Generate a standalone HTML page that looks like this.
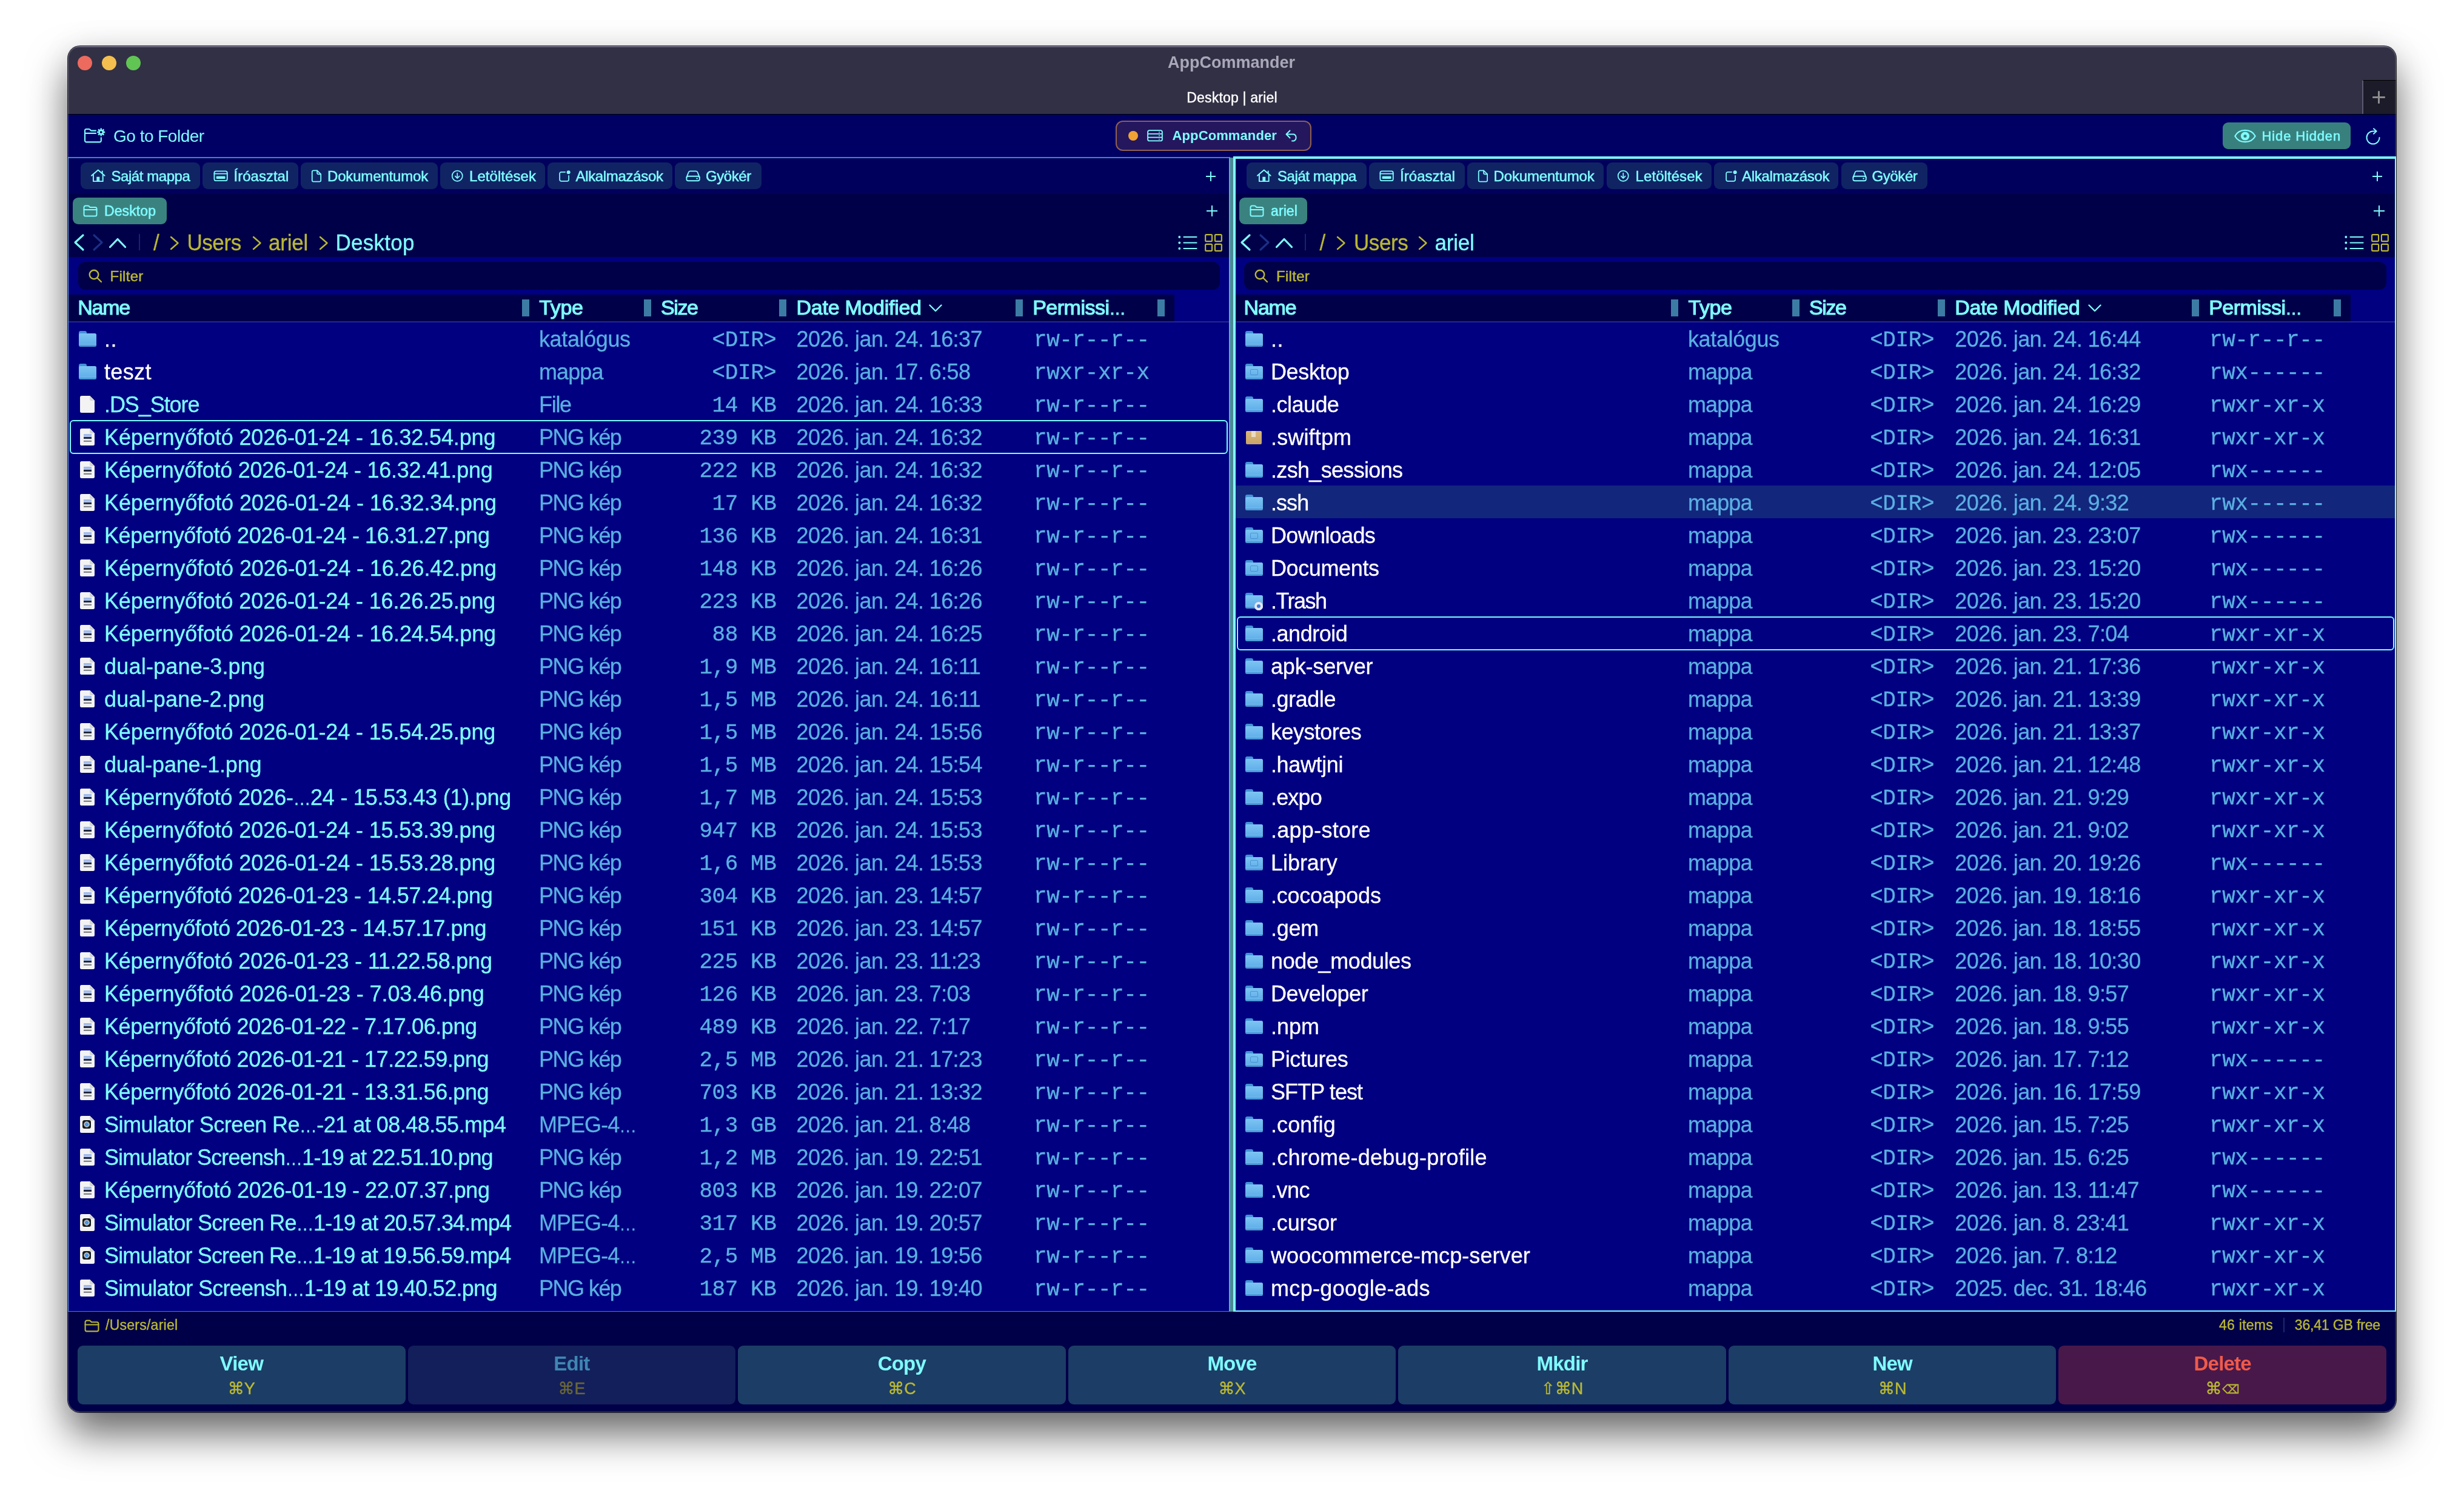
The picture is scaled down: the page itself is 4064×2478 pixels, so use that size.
<!DOCTYPE html>
<html lang="hu"><head><meta charset="utf-8"><title>AppCommander</title>
<style>
*{box-sizing:border-box;margin:0;padding:0}
html,body{width:4064px;height:2478px;overflow:hidden;background:#fff}
body{position:relative;font-family:"Liberation Sans","DejaVu Sans",sans-serif;color:#7ffcff}
span,i,b,div,svg{position:absolute;display:block;white-space:pre;font-style:normal;font-weight:400}
#shadow{left:112px;top:76px;width:3840px;height:2254px;border-radius:20px;box-shadow:0 0 0 1px rgba(0,0,0,.8),0 36px 66px 0 rgba(0,0,0,.58),0 0 60px rgba(0,0,0,.06)}
#win{will-change:transform;left:112px;top:76px;width:3840px;height:2254px;border-radius:20px;overflow:hidden;background:#000048}
#win::after{content:"";position:absolute;left:0;top:0;right:0;bottom:0;border-radius:20px;box-shadow:inset 0 0 0 1.5px rgba(255,255,255,.17);pointer-events:none;z-index:50}
#titlebar{z-index:2;left:0;top:0;width:3840px;height:113px;background:#323044;border-bottom:1px solid #000;border-top:2px solid #595870}
.tl{top:14px;width:24px;height:24px;border-radius:50%}
#title{left:-1px;width:3840px;text-align:center;top:9.1px;font-size:27px;line-height:32px;font-weight:700;color:#a9a7b8}
#subtitle{-webkit-text-stroke:.4px #fff;left:0;width:3840px;text-align:center;top:68.5px;font-size:23px;line-height:28px;letter-spacing:.2px;color:#fff}
#newtab{left:3784px;top:54px;width:56px;height:56px;background:#1c1b29;border-left:2px solid #5b5a70;border-top:1.5px solid #000}
.plus::before,.plus::after{content:"";position:absolute;background:#7ffcff}
.plus::before{left:0;right:0;top:calc(50% - 1px);height:2px}
.plus::after{top:0;bottom:0;left:calc(50% - 1px);width:2px}
.plus.g::before,.plus.g::after{background:#8c8c8e;border-radius:1.3px}
.plus.g::before{height:2.6px;top:calc(50% - 1.3px)}.plus.g::after{width:2.6px;left:calc(50% - 1.3px)}
#toolbar{left:0;top:112px;width:3840px;height:72px;background:#000064}
.ic{line-height:0}
#gtf{left:75px;top:21.5px;font-size:28px;line-height:30px;letter-spacing:-.5px}
#pill{left:1727.6px;top:11px;width:323px;height:50px;border:2px solid #8f6052;border-radius:12px;background:#24175e}
#pill .dot{left:19.4px;top:15.2px;width:16px;height:16px;border-radius:50%;background:#f0a335}
#pill .pt{left:92px;top:8.9px;font-size:22px;line-height:28px;font-weight:700;letter-spacing:.1px}
#hide{left:3554px;top:14px;width:210.6px;height:44px;border-radius:9px;background:#38807e}
#hide .hx{left:64.6px;top:8.6px;font-size:22px;line-height:28px;letter-spacing:.85px;-webkit-text-stroke:.55px #7ffcff}
#divider{left:1917px;top:184px;width:5px;height:1904px;background:#4a8a94}
.pane{border:2px solid #3c86c8;border-right-color:#58aacc;overflow:hidden;background:#000048;box-sizing:content-box}
.pane.act{border-color:#7ffcff;z-index:3}
.favbar{left:0;right:0;background:#00005c}
.fav{height:43.5px;border-radius:9px;background:#102464}

.fav .ft{top:.9px;font-size:24px;line-height:43.5px;letter-spacing:-.42px;-webkit-text-stroke:.5px #7ffcff}
.tab{height:43.5px;border-radius:9px;background:#3a8280}
.tab .ic{top:11.5px}
.tab .tt{top:.8px;font-size:23px;line-height:43.5px;letter-spacing:.1px;-webkit-text-stroke:.55px #7ffcff}
.vsep{width:2px;height:27px;background:#15246e}
.crumb{font-size:35px;line-height:48px;transform:scaleY(1.08);transform-origin:0 36.1px;-webkit-text-stroke:.3px}
.crumb.y{color:#bab833}.crumb.cy{color:#7ffcff}
.listbg{left:0;right:0;background:#000080}
.filter{height:46px;border-radius:12px;background:#000048}
.filter .ftx{left:53px;top:1.2px;font-size:24px;line-height:45px;letter-spacing:.3px;color:#bab833;-webkit-text-stroke:.5px #bab833}
.hdr{left:0;height:44px;background:#000048}
.hline{left:0;right:0;height:1.5px;background:#262694}
.hh{width:12px;height:28px;background:#3c7ca4}
.ht{font-size:34px;line-height:44px;font-weight:400;-webkit-text-stroke:1.15px;margin-top:-.8px}
.row{left:0;right:0;height:54px}
.row.hov{background:#12267c}
.cur{left:2px;right:2px;top:0;bottom:-2px;border:2px solid #7ffcff;border-radius:6px;z-index:2}
.pane.act .cur{right:1px}
.ri{top:0;width:30px;height:54px}
.nm{top:2px;font-size:36px;-webkit-text-stroke:.3px;line-height:54px;color:#7ffcff}
.nm.w{color:#fff}
.ty,.dt{top:2px;font-size:36px;-webkit-text-stroke:.3px;line-height:54px;color:#5aafe1}
.dt{letter-spacing:-.6px}
.sz,.pm{top:4px;font-family:"Liberation Mono","DejaVu Sans Mono",monospace;font-size:36px;line-height:54px;letter-spacing:-.42px;color:#5aafe1;-webkit-text-stroke:.35px}
.fo{left:0;top:15px;width:29px;height:26px}
.fo::before{content:"";position:absolute;left:0;top:0;width:13px;height:8px;border-radius:3px 3px 0 0;background:#4392d6}
.fo::after{content:"";position:absolute;left:0;top:4px;width:29px;height:22px;border-radius:2.5px;background:linear-gradient(#7cc4f3 0,#62b0ea 78%,#7abfee 82%,#4d9cdc 88%,#4a98d8 100%)}
.fo b{z-index:2}
.em{left:8px;top:9px;width:13px;height:10px;border:1.5px solid rgba(50,120,190,.6);border-radius:2px}
.bd{left:15px;top:15px;width:14px;height:14px;border-radius:50%;background:#e8e8ee;box-shadow:inset 0 0 0 4px #e8e8ee, inset 0 0 0 7px #3a7ae0}
.pk{left:1.5px;top:18px;width:26px;height:22px;border-radius:2px;background:linear-gradient(#d9b87c,#c9a468)}
.pk::after{content:"";position:absolute;left:9px;top:0;width:7px;height:10px;background:#eadcc0}
.fi{left:2.5px;top:14.3px;width:24px;height:28px;border-radius:2.5px;background:linear-gradient(225deg,rgba(0,0,0,0) 5.6px,#f3f3f3 5.6px)}
.fi::after{content:"";position:absolute;right:0;top:0;width:8px;height:8px;background:linear-gradient(225deg,rgba(0,0,0,0) 5.6px,#d4d4d4 5.6px);border-radius:0 0 0 2px}
.pv{left:5.5px;top:8.5px;width:13px;height:13.5px;background:linear-gradient(#9db8ea 0,#b4c6ee 42%,#1d2233 42%,#2b3148 62%,#f2f2f2 62%,#dadada 84%,#606068 84%,#9a9aa0 100%)}
.qt{left:4px;top:7px;width:14px;height:14px;border-radius:3.5px;background:radial-gradient(circle at 50% 50%,#4aa0f0 0,#3a90e8 2.6px,#c8ccd2 3.2px,#9a9ea6 4.6px,#16171a 5.2px)}
#status{left:0;top:2088px;width:3840px;height:56px;background:#000048}
#status .st{top:0;font-size:23px;line-height:44px;letter-spacing:.25px;color:#bab833;-webkit-text-stroke:.4px #bab833}
#status .ic{}
.ssep{left:3654px;top:10px;width:2px;height:24px;background:#1a2a6e}
.btn{height:97px;border-radius:9px;background:#1c3d66}
.btn.dis{background:#121f5a}
.btn.del{background:#48184a}
.btn span{left:0;right:0;text-align:center}
.b1{top:10.3px;font-size:33px;line-height:40px;font-weight:700;letter-spacing:-.8px}
.b2{top:54.6px;font-size:27px;line-height:32px;color:#bab833;-webkit-text-stroke:.4px}
.btn.dis .b1{color:#3f86b4}.btn.dis .b2{color:#6a6638}
.btn.del .b1{color:#f05a4a}

em{font-style:normal;font-size:.74em;position:relative;top:-1px;margin-left:1px}
u{text-decoration:none;font-size:.8em;letter-spacing:-.5px}

</style></head><body>
<div id="shadow"></div>
<div id="win">
<div id="titlebar">
<i class="tl" style="left:16px;background:#ed6a5e"></i><i class="tl" style="left:56px;background:#f5bf4f"></i><i class="tl" style="left:96px;background:#61c554"></i>
<div id="title">AppCommander</div>
<div id="subtitle">Desktop | ariel</div>
<div id="newtab"><div class="plus g" style="left:14.6px;top:16.9px;width:21.5px;height:21.5px"></div></div>
</div>
<div id="toolbar">
<span class="ic" style="left:26px;top:22px;color:#7ffcff"><svg width="37" height="28" viewBox="0 0 37 28" fill="none" stroke="currentColor" stroke-width="2.1" stroke-linecap="round" stroke-linejoin="round"><path d="M2 9.9V5.45a2.5 2.5 0 0 1 2.5-2.5H8.6a2 2 0 0 1 1.4.6L11.6 5a2 2 0 0 0 1.4.6H20M2 9.9H20M2 9.9V21.9a2.5 2.5 0 0 0 2.5 2.5H26.3a2.5 2.5 0 0 0 2.5-2.5V17.2"/><circle cx="28.7" cy="8.1" r="3.3" stroke-width="2.7"/><path d="M33.00 8.10L35.20 8.10M31.74 11.14L33.30 12.70M28.70 12.40L28.70 14.60M25.66 11.14L24.10 12.70M24.40 8.10L22.20 8.10M25.66 5.06L24.10 3.50M28.70 3.80L28.70 1.60M31.74 5.06L33.30 3.50" stroke-width="2.5" stroke-linecap="butt"/></svg></span>
<span id="gtf">Go to Folder</span>
<div id="pill"><i class="dot"></i><span class="ic" style="left:50px;top:13.3px;color:#7ffcff"><svg width="26" height="19.6" viewBox="0 0 28 21" fill="none" stroke="currentColor" stroke-width="2" stroke-linejoin="round"><rect x="1.2" y="1.2" width="25.6" height="18.6" rx="3"/><path d="M1.2 7.4 H26.8 M1.2 13.6 H26.8"/><circle cx="21.5" cy="4.3" r="1" fill="currentColor" stroke="none"/><circle cx="21.5" cy="10.5" r="1" fill="currentColor" stroke="none"/><circle cx="21.5" cy="16.7" r="1" fill="currentColor" stroke="none"/></svg></span><span class="pt">AppCommander</span><span class="ic" style="left:278.5px;top:13px;color:#7ffcff"><svg width="22" height="20" viewBox="0 0 22 20" fill="none" stroke="currentColor" stroke-width="2" stroke-linecap="round" stroke-linejoin="round"><path d="M7.5 1.5 L1.5 7.5 L7.5 13.5"/><path d="M2 7.5 H14 a6 6 0 0 1 0 11 H11"/></svg></span></div>
<div id="hide"><span class="ic" style="left:18.6px;top:10.5px;color:#7ffcff"><svg width="36" height="23" viewBox="0 0 36 23" style="overflow:visible" fill="none" stroke="currentColor" stroke-width="2.2" stroke-linejoin="round"><path d="M1.3 11.5 C8 -1.3 28 -1.3 34.7 11.5 C28 24.3 8 24.3 1.3 11.5 Z"/><circle cx="18" cy="11.5" r="7.1" fill="currentColor" stroke="none"/><circle cx="18" cy="11.5" r="2.6" fill="#38807e" stroke="none"/></svg></span><span class="hx">Hide Hidden</span></div>
<span class="ic" style="left:3790px;top:23px;color:#7ffcff"><svg width="24" height="28" viewBox="0 0 24 28" fill="none" stroke="currentColor" stroke-width="2" stroke-linecap="round" stroke-linejoin="round"><path d="M22.5 16 A10.5 10.5 0 1 1 12 5.5 H17"/><path d="M13 1.2 L17.6 5.5 L13 9.8"/></svg></span>
</div>
<div id="divider"></div>
<div class="pane" style="left:0px;top:183px;width:1914px;height:1902px;border-width:2px 2px 1px 1px"><div class="favbar" style="top:0;height:59px"></div><div class="fav" style="left:19.5px;top:7px;width:197.5px"><span class="ic" style="left:16.1px;top:10.3px"><svg width="25.6" height="23.6" viewBox="0 0 26 24" style="" fill="none" stroke="currentColor" stroke-linecap="round" stroke-linejoin="round"><path d="M2 12 L13 2.5 L24 12" stroke-width="2"/><path d="M5 10.5 V21.5 H21 V10.5" stroke-width="2"/><path d="M20 8 V4.5" stroke-width="2"/><rect x="10.5" y="14" width="5" height="7.5" fill="currentColor" stroke="none"/></svg></span><span class="ft" style="left:50.9px;letter-spacing:-0.427px">Saját mappa</span></div><div class="fav" style="left:221.4px;top:7px;width:157.6px"><span class="ic" style="left:17.4px;top:12.9px"><svg width="24.2" height="18.6" viewBox="0 0 26 20" style="" fill="none" stroke="currentColor" stroke-linecap="round" stroke-linejoin="round"><rect x="1.5" y="1.5" width="23" height="17" rx="3" stroke-width="2"/><path d="M1.5 6 H24.5" stroke-width="2"/><rect x="5" y="10.5" width="16" height="4.5" rx="1" fill="currentColor" stroke="none"/></svg></span><span class="ft" style="left:51.1px;letter-spacing:0.012px">Íróasztal</span></div><div class="fav" style="left:383.0px;top:7px;width:225.8px"><span class="ic" style="left:17.3px;top:12px"><svg width="17.5" height="21" viewBox="0 0 20 24" style="" fill="none" stroke="currentColor" stroke-linecap="round" stroke-linejoin="round"><path d="M4.5 1.5 H11.5 L18.5 8.5 V20 a2.5 2.5 0 0 1 -2.5 2.5 H4.5 A2.5 2.5 0 0 1 2 20 V4 A2.5 2.5 0 0 1 4.5 1.5 Z" stroke-width="2"/><path d="M11.5 1.5 V6 a2.5 2.5 0 0 0 2.5 2.5 H18.5" stroke-width="2"/></svg></span><span class="ft" style="left:44.0px;letter-spacing:-0.171px">Dokumentumok</span></div><div class="fav" style="left:613.0px;top:7px;width:173.0px"><span class="ic" style="left:17.8px;top:12.2px"><svg width="20.5" height="20.5" viewBox="0 0 24 24" style="" fill="none" stroke="currentColor" stroke-linecap="round" stroke-linejoin="round"><circle cx="12" cy="12" r="10" stroke-width="2"/><path d="M12 6.5 V16.5 M8 12.5 L12 16.5 L16 12.5" stroke-width="2"/></svg></span><span class="ft" style="left:48.0px;letter-spacing:0.066px">Letöltések</span></div><div class="fav" style="left:790.0px;top:7px;width:205.8px"><span class="ic" style="left:18.0px;top:12.2px"><svg width="20.5" height="20.5" viewBox="0 0 24 24" style="" fill="none" stroke="currentColor" stroke-linecap="round" stroke-linejoin="round"><path d="M13 4.5 H5.5 A3 3 0 0 0 2.5 7.5 V19 a3 3 0 0 0 3 3 H17 a3 3 0 0 0 3 -3 V11.5" stroke-width="2"/><circle cx="19.5" cy="5" r="3.5" fill="currentColor" stroke="none"/></svg></span><span class="ft" style="left:46.5px;letter-spacing:-0.333px">Alkalmazások</span></div><div class="fav" style="left:1000.0px;top:7px;width:142.8px"><span class="ic" style="left:18.2px;top:13.4px"><svg width="24.2" height="18.6" viewBox="0 0 26 20" style="" fill="none" stroke="currentColor" stroke-linecap="round" stroke-linejoin="round"><path d="M1.5 12.5 L5 3.5 A3 3 0 0 1 7.8 1.5 H18.2 A3 3 0 0 1 21 3.5 L24.5 12.5" stroke-width="2"/><rect x="1.5" y="10.5" width="23" height="8" rx="3" stroke-width="2"/><circle cx="20" cy="14.5" r="1.3" fill="currentColor" stroke="none"/></svg></span><span class="ft" style="left:51.0px;letter-spacing:-0.432px">Gyökér</span></div><div class="plus" style="left:1876px;top:21.600000000000023px;width:16px;height:16px"></div><div class="tab" style="left:7.0px;top:65px;width:154.7px"><span class="ic" style="left:17px"><svg width="24" height="20" viewBox="0 0 24 20" style="" fill="none" stroke="currentColor" stroke-linecap="round" stroke-linejoin="round"><path d="M1.5 5 V16 a2.5 2.5 0 0 0 2.5 2.5 H20 a2.5 2.5 0 0 0 2.5 -2.5 V6.5 A2.5 2.5 0 0 0 20 4 H11.5 L9.5 2 A2 2 0 0 0 8.2 1.5 H4 A2.5 2.5 0 0 0 1.5 4 Z" stroke-width="2"/><path d="M1.5 8 H22.5" stroke-width="2"/></svg></span><span class="tt" style="left:52px">Desktop</span></div><div class="plus" style="left:1877px;top:78px;width:18px;height:18px"></div><svg class="nav" style="left:7.0px;top:123px" width="96" height="32" viewBox="0 0 96 32" fill="none" stroke-linecap="round" stroke-linejoin="round"><path d="M17 4 L4 16 L17 28" stroke="#7ffcff" stroke-width="3.2"/><path d="M35 4 L48 16 L35 28" stroke="#1c2f86" stroke-width="3.2"/><path d="M61.5 23.5 L74 10.5 L86.5 23.5" stroke="#7ffcff" stroke-width="3.2"/></svg><div class="vsep" style="left:115.5px;top:125px"></div><span class="crumb y" style="left:140.0px;top:116.19999999999999px;letter-spacing:0px">/</span><svg class="nav" style="left:167.0px;top:128px" width="16" height="24" viewBox="0 0 16 24" fill="none" stroke="#bab833" stroke-width="2.4" stroke-linecap="round" stroke-linejoin="round"><path d="M2 2 L13.5 12 L2 22"/></svg><span class="crumb y" style="left:195.4px;top:116.19999999999999px;letter-spacing:-0.402px">Users</span><svg class="nav" style="left:302.6px;top:128px" width="16" height="24" viewBox="0 0 16 24" fill="none" stroke="#bab833" stroke-width="2.4" stroke-linecap="round" stroke-linejoin="round"><path d="M2 2 L13.5 12 L2 22"/></svg><span class="crumb y" style="left:330.0px;top:116.19999999999999px;letter-spacing:-0.21px">ariel</span><svg class="nav" style="left:413.0px;top:128px" width="16" height="24" viewBox="0 0 16 24" fill="none" stroke="#bab833" stroke-width="2.4" stroke-linecap="round" stroke-linejoin="round"><path d="M2 2 L13.5 12 L2 22"/></svg><span class="crumb cy" style="left:440.5px;top:116.19999999999999px;letter-spacing:0.266px">Desktop</span><svg class="nav" style="left:1830.0px;top:127px" width="32" height="25" viewBox="0 0 32 25" fill="none" stroke="#7ffcff" stroke-width="2.2" stroke-linecap="round"><path d="M9.5 3 H30.5 M9.5 12.5 H30.5 M9.5 22 H30.5"/><circle cx="2.3" cy="3" r="1.9" fill="#7ffcff" stroke="none"/><circle cx="2.3" cy="12.5" r="1.9" fill="#7ffcff" stroke="none"/><circle cx="2.3" cy="22" r="1.9" fill="#7ffcff" stroke="none"/></svg><svg class="nav" style="left:1873.5px;top:124.5px" width="29" height="29" viewBox="0 0 30 30" fill="none" stroke="#bab833" stroke-width="2.2"><rect x="1.2" y="1.2" width="11.3" height="11.3" rx="1.5"/><rect x="17.5" y="1.2" width="11.3" height="11.3" rx="1.5"/><rect x="1.2" y="17.5" width="11.3" height="11.3" rx="1.5"/><rect x="17.5" y="17.5" width="11.3" height="11.3" rx="1.5"/></svg><div class="listbg" style="top:163px;height:1739px"></div><div class="filter" style="left:15.5px;top:171px;width:1883.2px"><svg style="position:absolute;left:17px;top:12px" width="23" height="23" viewBox="0 0 23 23" fill="none" stroke="#bab833" stroke-width="2.4" stroke-linecap="round"><circle cx="9" cy="9" r="7.3"/><path d="M14.5 14.5 L21 21"/></svg><span class="ftx">Filter</span></div><div class="hdr" style="top:225px;width:1824.0px"></div><div class="hline" style="top:269px"></div><div class="hh" style="left:748.0px;top:233px"></div><div class="hh" style="left:949.0px;top:233px"></div><div class="hh" style="left:1171.7px;top:233px"></div><div class="hh" style="left:1562.3px;top:233px"></div><div class="hh" style="left:1795.8px;top:233px"></div><span class="ht" style="left:15.2px;top:225px;letter-spacing:-1.234px">Name</span><span class="ht" style="left:776.3px;top:225px;letter-spacing:-0.406px">Type</span><span class="ht" style="left:977.0px;top:225px;letter-spacing:-1.38px">Size</span><span class="ht" style="left:1200.6px;top:225px;letter-spacing:-0.282px">Date Modified</span><span class="ht" style="left:1590.2px;top:225px;letter-spacing:-0.504px">Permissi<u>…</u></span><svg class="nav" style="left:1419.0px;top:241px" width="22" height="13" viewBox="0 0 22 13" fill="none" stroke="#7ffcff" stroke-width="2.4" stroke-linecap="round" stroke-linejoin="round"><path d="M1.5 1.5 L11 11 L20.5 1.5"/></svg><div class="row" style="top:270px"><span class="ri" style="left:16.5px"><i class="fo"></i></span><span class="nm w" style="left:59.0px;letter-spacing:0.5px">..</span><span class="ty" style="left:776.0px;letter-spacing:-0.376px">katalógus</span><span class="sz" style="right:746.5px">&lt;DIR&gt;</span><span class="dt" style="left:1200.6px">2026. jan. 24. 16:37</span><span class="pm" style="left:1592.0px">rw-r--r--</span></div><div class="row" style="top:324px"><span class="ri" style="left:16.5px"><i class="fo"></i></span><span class="nm w" style="left:59.0px;letter-spacing:0.367px">teszt</span><span class="ty" style="left:776.0px;letter-spacing:-0.895px">mappa</span><span class="sz" style="right:746.5px">&lt;DIR&gt;</span><span class="dt" style="left:1200.6px">2026. jan. 17. 6:58</span><span class="pm" style="left:1592.0px">rwxr-xr-x</span></div><div class="row" style="top:378px"><span class="ri" style="left:16.5px"><i class="fi"></i></span><span class="nm" style="left:59.0px;letter-spacing:-1.072px">.DS_Store</span><span class="ty" style="left:776.0px;letter-spacing:-1.305px">File</span><span class="sz" style="right:746.5px">14 KB</span><span class="dt" style="left:1200.6px">2026. jan. 24. 16:33</span><span class="pm" style="left:1592.0px">rw-r--r--</span></div><div class="row" style="top:432px"><div class="cur"></div><span class="ri" style="left:16.5px"><i class="fi"><b class="pv"></b></i></span><span class="nm" style="left:59.0px;letter-spacing:-0.135px">Képernyőfotó 2026-01-24 - 16.32.54.png</span><span class="ty" style="left:776.0px;letter-spacing:-1.527px">PNG kép</span><span class="sz" style="right:746.5px">239 KB</span><span class="dt" style="left:1200.6px">2026. jan. 24. 16:32</span><span class="pm" style="left:1592.0px">rw-r--r--</span></div><div class="row" style="top:486px"><span class="ri" style="left:16.5px"><i class="fi"><b class="pv"></b></i></span><span class="nm" style="left:59.0px;letter-spacing:-0.265px">Képernyőfotó 2026-01-24 - 16.32.41.png</span><span class="ty" style="left:776.0px;letter-spacing:-1.527px">PNG kép</span><span class="sz" style="right:746.5px">222 KB</span><span class="dt" style="left:1200.6px">2026. jan. 24. 16:32</span><span class="pm" style="left:1592.0px">rw-r--r--</span></div><div class="row" style="top:540px"><span class="ri" style="left:16.5px"><i class="fi"><b class="pv"></b></i></span><span class="nm" style="left:59.0px;letter-spacing:-0.097px">Képernyőfotó 2026-01-24 - 16.32.34.png</span><span class="ty" style="left:776.0px;letter-spacing:-1.527px">PNG kép</span><span class="sz" style="right:746.5px">17 KB</span><span class="dt" style="left:1200.6px">2026. jan. 24. 16:32</span><span class="pm" style="left:1592.0px">rw-r--r--</span></div><div class="row" style="top:594px"><span class="ri" style="left:16.5px"><i class="fi"><b class="pv"></b></i></span><span class="nm" style="left:59.0px;letter-spacing:-0.392px">Képernyőfotó 2026-01-24 - 16.31.27.png</span><span class="ty" style="left:776.0px;letter-spacing:-1.527px">PNG kép</span><span class="sz" style="right:746.5px">136 KB</span><span class="dt" style="left:1200.6px">2026. jan. 24. 16:31</span><span class="pm" style="left:1592.0px">rw-r--r--</span></div><div class="row" style="top:648px"><span class="ri" style="left:16.5px"><i class="fi"><b class="pv"></b></i></span><span class="nm" style="left:59.0px;letter-spacing:-0.097px">Képernyőfotó 2026-01-24 - 16.26.42.png</span><span class="ty" style="left:776.0px;letter-spacing:-1.527px">PNG kép</span><span class="sz" style="right:746.5px">148 KB</span><span class="dt" style="left:1200.6px">2026. jan. 24. 16:26</span><span class="pm" style="left:1592.0px">rw-r--r--</span></div><div class="row" style="top:702px"><span class="ri" style="left:16.5px"><i class="fi"><b class="pv"></b></i></span><span class="nm" style="left:59.0px;letter-spacing:-0.138px">Képernyőfotó 2026-01-24 - 16.26.25.png</span><span class="ty" style="left:776.0px;letter-spacing:-1.527px">PNG kép</span><span class="sz" style="right:746.5px">223 KB</span><span class="dt" style="left:1200.6px">2026. jan. 24. 16:26</span><span class="pm" style="left:1592.0px">rw-r--r--</span></div><div class="row" style="top:756px"><span class="ri" style="left:16.5px"><i class="fi"><b class="pv"></b></i></span><span class="nm" style="left:59.0px;letter-spacing:-0.119px">Képernyőfotó 2026-01-24 - 16.24.54.png</span><span class="ty" style="left:776.0px;letter-spacing:-1.527px">PNG kép</span><span class="sz" style="right:746.5px">88 KB</span><span class="dt" style="left:1200.6px">2026. jan. 24. 16:25</span><span class="pm" style="left:1592.0px">rw-r--r--</span></div><div class="row" style="top:810px"><span class="ri" style="left:16.5px"><i class="fi"><b class="pv"></b></i></span><span class="nm" style="left:59.0px;letter-spacing:0.206px">dual-pane-3.png</span><span class="ty" style="left:776.0px;letter-spacing:-1.527px">PNG kép</span><span class="sz" style="right:746.5px">1,9 MB</span><span class="dt" style="left:1200.6px">2026. jan. 24. 16:11</span><span class="pm" style="left:1592.0px">rw-r--r--</span></div><div class="row" style="top:864px"><span class="ri" style="left:16.5px"><i class="fi"><b class="pv"></b></i></span><span class="nm" style="left:59.0px;letter-spacing:0.149px">dual-pane-2.png</span><span class="ty" style="left:776.0px;letter-spacing:-1.527px">PNG kép</span><span class="sz" style="right:746.5px">1,5 MB</span><span class="dt" style="left:1200.6px">2026. jan. 24. 16:11</span><span class="pm" style="left:1592.0px">rw-r--r--</span></div><div class="row" style="top:918px"><span class="ri" style="left:16.5px"><i class="fi"><b class="pv"></b></i></span><span class="nm" style="left:59.0px;letter-spacing:-0.138px">Képernyőfotó 2026-01-24 - 15.54.25.png</span><span class="ty" style="left:776.0px;letter-spacing:-1.527px">PNG kép</span><span class="sz" style="right:746.5px">1,5 MB</span><span class="dt" style="left:1200.6px">2026. jan. 24. 15:56</span><span class="pm" style="left:1592.0px">rw-r--r--</span></div><div class="row" style="top:972px"><span class="ri" style="left:16.5px"><i class="fi"><b class="pv"></b></i></span><span class="nm" style="left:59.0px;letter-spacing:-0.194px">dual-pane-1.png</span><span class="ty" style="left:776.0px;letter-spacing:-1.527px">PNG kép</span><span class="sz" style="right:746.5px">1,5 MB</span><span class="dt" style="left:1200.6px">2026. jan. 24. 15:54</span><span class="pm" style="left:1592.0px">rw-r--r--</span></div><div class="row" style="top:1026px"><span class="ri" style="left:16.5px"><i class="fi"><b class="pv"></b></i></span><span class="nm" style="left:59.0px;letter-spacing:-0.248px">Képernyőfotó 2026-<u>…</u>24 - 15.53.43 (1).png</span><span class="ty" style="left:776.0px;letter-spacing:-1.527px">PNG kép</span><span class="sz" style="right:746.5px">1,7 MB</span><span class="dt" style="left:1200.6px">2026. jan. 24. 15:53</span><span class="pm" style="left:1592.0px">rw-r--r--</span></div><div class="row" style="top:1080px"><span class="ri" style="left:16.5px"><i class="fi"><b class="pv"></b></i></span><span class="nm" style="left:59.0px;letter-spacing:-0.138px">Képernyőfotó 2026-01-24 - 15.53.39.png</span><span class="ty" style="left:776.0px;letter-spacing:-1.527px">PNG kép</span><span class="sz" style="right:746.5px">947 KB</span><span class="dt" style="left:1200.6px">2026. jan. 24. 15:53</span><span class="pm" style="left:1592.0px">rw-r--r--</span></div><div class="row" style="top:1134px"><span class="ri" style="left:16.5px"><i class="fi"><b class="pv"></b></i></span><span class="nm" style="left:59.0px;letter-spacing:-0.138px">Képernyőfotó 2026-01-24 - 15.53.28.png</span><span class="ty" style="left:776.0px;letter-spacing:-1.527px">PNG kép</span><span class="sz" style="right:746.5px">1,6 MB</span><span class="dt" style="left:1200.6px">2026. jan. 24. 15:53</span><span class="pm" style="left:1592.0px">rw-r--r--</span></div><div class="row" style="top:1188px"><span class="ri" style="left:16.5px"><i class="fi"><b class="pv"></b></i></span><span class="nm" style="left:59.0px;letter-spacing:-0.265px">Képernyőfotó 2026-01-23 - 14.57.24.png</span><span class="ty" style="left:776.0px;letter-spacing:-1.527px">PNG kép</span><span class="sz" style="right:746.5px">304 KB</span><span class="dt" style="left:1200.6px">2026. jan. 23. 14:57</span><span class="pm" style="left:1592.0px">rw-r--r--</span></div><div class="row" style="top:1242px"><span class="ri" style="left:16.5px"><i class="fi"><b class="pv"></b></i></span><span class="nm" style="left:59.0px;letter-spacing:-0.541px">Képernyőfotó 2026-01-23 - 14.57.17.png</span><span class="ty" style="left:776.0px;letter-spacing:-1.527px">PNG kép</span><span class="sz" style="right:746.5px">151 KB</span><span class="dt" style="left:1200.6px">2026. jan. 23. 14:57</span><span class="pm" style="left:1592.0px">rw-r--r--</span></div><div class="row" style="top:1296px"><span class="ri" style="left:16.5px"><i class="fi"><b class="pv"></b></i></span><span class="nm" style="left:59.0px;letter-spacing:-0.214px">Képernyőfotó 2026-01-23 - 11.22.58.png</span><span class="ty" style="left:776.0px;letter-spacing:-1.527px">PNG kép</span><span class="sz" style="right:746.5px">225 KB</span><span class="dt" style="left:1200.6px">2026. jan. 23. 11:23</span><span class="pm" style="left:1592.0px">rw-r--r--</span></div><div class="row" style="top:1350px"><span class="ri" style="left:16.5px"><i class="fi"><b class="pv"></b></i></span><span class="nm" style="left:59.0px;letter-spacing:-0.105px">Képernyőfotó 2026-01-23 - 7.03.46.png</span><span class="ty" style="left:776.0px;letter-spacing:-1.527px">PNG kép</span><span class="sz" style="right:746.5px">126 KB</span><span class="dt" style="left:1200.6px">2026. jan. 23. 7:03</span><span class="pm" style="left:1592.0px">rw-r--r--</span></div><div class="row" style="top:1404px"><span class="ri" style="left:16.5px"><i class="fi"><b class="pv"></b></i></span><span class="nm" style="left:59.0px;letter-spacing:-0.43px">Képernyőfotó 2026-01-22 - 7.17.06.png</span><span class="ty" style="left:776.0px;letter-spacing:-1.527px">PNG kép</span><span class="sz" style="right:746.5px">489 KB</span><span class="dt" style="left:1200.6px">2026. jan. 22. 7:17</span><span class="pm" style="left:1592.0px">rw-r--r--</span></div><div class="row" style="top:1458px"><span class="ri" style="left:16.5px"><i class="fi"><b class="pv"></b></i></span><span class="nm" style="left:59.0px;letter-spacing:-0.432px">Képernyőfotó 2026-01-21 - 17.22.59.png</span><span class="ty" style="left:776.0px;letter-spacing:-1.527px">PNG kép</span><span class="sz" style="right:746.5px">2,5 MB</span><span class="dt" style="left:1200.6px">2026. jan. 21. 17:23</span><span class="pm" style="left:1592.0px">rw-r--r--</span></div><div class="row" style="top:1512px"><span class="ri" style="left:16.5px"><i class="fi"><b class="pv"></b></i></span><span class="nm" style="left:59.0px;letter-spacing:-0.432px">Képernyőfotó 2026-01-21 - 13.31.56.png</span><span class="ty" style="left:776.0px;letter-spacing:-1.527px">PNG kép</span><span class="sz" style="right:746.5px">703 KB</span><span class="dt" style="left:1200.6px">2026. jan. 21. 13:32</span><span class="pm" style="left:1592.0px">rw-r--r--</span></div><div class="row" style="top:1566px"><span class="ri" style="left:16.5px"><i class="fi"><b class="qt"></b></i></span><span class="nm" style="left:59.0px;letter-spacing:-0.531px">Simulator Screen Re<u>…</u>-21 at 08.48.55.mp4</span><span class="ty" style="left:776.0px;letter-spacing:-0.971px">MPEG-4<u>…</u></span><span class="sz" style="right:746.5px">1,3 GB</span><span class="dt" style="left:1200.6px">2026. jan. 21. 8:48</span><span class="pm" style="left:1592.0px">rw-r--r--</span></div><div class="row" style="top:1620px"><span class="ri" style="left:16.5px"><i class="fi"><b class="pv"></b></i></span><span class="nm" style="left:59.0px;letter-spacing:-0.895px">Simulator Screensh<u>…</u>1-19 at 22.51.10.png</span><span class="ty" style="left:776.0px;letter-spacing:-1.527px">PNG kép</span><span class="sz" style="right:746.5px">1,2 MB</span><span class="dt" style="left:1200.6px">2026. jan. 19. 22:51</span><span class="pm" style="left:1592.0px">rw-r--r--</span></div><div class="row" style="top:1674px"><span class="ri" style="left:16.5px"><i class="fi"><b class="pv"></b></i></span><span class="nm" style="left:59.0px;letter-spacing:-0.392px">Képernyőfotó 2026-01-19 - 22.07.37.png</span><span class="ty" style="left:776.0px;letter-spacing:-1.527px">PNG kép</span><span class="sz" style="right:746.5px">803 KB</span><span class="dt" style="left:1200.6px">2026. jan. 19. 22:07</span><span class="pm" style="left:1592.0px">rw-r--r--</span></div><div class="row" style="top:1728px"><span class="ri" style="left:16.5px"><i class="fi"><b class="qt"></b></i></span><span class="nm" style="left:59.0px;letter-spacing:-0.81px">Simulator Screen Re<u>…</u>1-19 at 20.57.34.mp4</span><span class="ty" style="left:776.0px;letter-spacing:-0.971px">MPEG-4<u>…</u></span><span class="sz" style="right:746.5px">317 KB</span><span class="dt" style="left:1200.6px">2026. jan. 19. 20:57</span><span class="pm" style="left:1592.0px">rw-r--r--</span></div><div class="row" style="top:1782px"><span class="ri" style="left:16.5px"><i class="fi"><b class="qt"></b></i></span><span class="nm" style="left:59.0px;letter-spacing:-0.83px">Simulator Screen Re<u>…</u>1-19 at 19.56.59.mp4</span><span class="ty" style="left:776.0px;letter-spacing:-0.971px">MPEG-4<u>…</u></span><span class="sz" style="right:746.5px">2,5 MB</span><span class="dt" style="left:1200.6px">2026. jan. 19. 19:56</span><span class="pm" style="left:1592.0px">rw-r--r--</span></div><div class="row" style="top:1836px"><span class="ri" style="left:16.5px"><i class="fi"><b class="pv"></b></i></span><span class="nm" style="left:59.0px;letter-spacing:-0.711px">Simulator Screensh<u>…</u>1-19 at 19.40.52.png</span><span class="ty" style="left:776.0px;letter-spacing:-1.527px">PNG kép</span><span class="sz" style="right:746.5px">187 KB</span><span class="dt" style="left:1200.6px">2026. jan. 19. 19:40</span><span class="pm" style="left:1592.0px">rw-r--r--</span></div></div>
<div class="pane act" style="left:1922px;top:182px;width:1912px;height:1900px;border-width:4px 2px 2px 4px"><div class="favbar" style="top:0;height:58px"></div><div class="fav" style="left:18.1px;top:6px;width:197.5px"><span class="ic" style="left:16.1px;top:10.3px"><svg width="25.6" height="23.6" viewBox="0 0 26 24" style="" fill="none" stroke="currentColor" stroke-linecap="round" stroke-linejoin="round"><path d="M2 12 L13 2.5 L24 12" stroke-width="2"/><path d="M5 10.5 V21.5 H21 V10.5" stroke-width="2"/><path d="M20 8 V4.5" stroke-width="2"/><rect x="10.5" y="14" width="5" height="7.5" fill="currentColor" stroke="none"/></svg></span><span class="ft" style="left:50.9px;letter-spacing:-0.427px">Saját mappa</span></div><div class="fav" style="left:220.0px;top:6px;width:157.6px"><span class="ic" style="left:17.4px;top:12.9px"><svg width="24.2" height="18.6" viewBox="0 0 26 20" style="" fill="none" stroke="currentColor" stroke-linecap="round" stroke-linejoin="round"><rect x="1.5" y="1.5" width="23" height="17" rx="3" stroke-width="2"/><path d="M1.5 6 H24.5" stroke-width="2"/><rect x="5" y="10.5" width="16" height="4.5" rx="1" fill="currentColor" stroke="none"/></svg></span><span class="ft" style="left:51.1px;letter-spacing:0.012px">Íróasztal</span></div><div class="fav" style="left:381.6px;top:6px;width:225.8px"><span class="ic" style="left:17.3px;top:12px"><svg width="17.5" height="21" viewBox="0 0 20 24" style="" fill="none" stroke="currentColor" stroke-linecap="round" stroke-linejoin="round"><path d="M4.5 1.5 H11.5 L18.5 8.5 V20 a2.5 2.5 0 0 1 -2.5 2.5 H4.5 A2.5 2.5 0 0 1 2 20 V4 A2.5 2.5 0 0 1 4.5 1.5 Z" stroke-width="2"/><path d="M11.5 1.5 V6 a2.5 2.5 0 0 0 2.5 2.5 H18.5" stroke-width="2"/></svg></span><span class="ft" style="left:44.0px;letter-spacing:-0.171px">Dokumentumok</span></div><div class="fav" style="left:611.6px;top:6px;width:173.0px"><span class="ic" style="left:17.8px;top:12.2px"><svg width="20.5" height="20.5" viewBox="0 0 24 24" style="" fill="none" stroke="currentColor" stroke-linecap="round" stroke-linejoin="round"><circle cx="12" cy="12" r="10" stroke-width="2"/><path d="M12 6.5 V16.5 M8 12.5 L12 16.5 L16 12.5" stroke-width="2"/></svg></span><span class="ft" style="left:48.0px;letter-spacing:0.066px">Letöltések</span></div><div class="fav" style="left:788.6px;top:6px;width:205.8px"><span class="ic" style="left:18.0px;top:12.2px"><svg width="20.5" height="20.5" viewBox="0 0 24 24" style="" fill="none" stroke="currentColor" stroke-linecap="round" stroke-linejoin="round"><path d="M13 4.5 H5.5 A3 3 0 0 0 2.5 7.5 V19 a3 3 0 0 0 3 3 H17 a3 3 0 0 0 3 -3 V11.5" stroke-width="2"/><circle cx="19.5" cy="5" r="3.5" fill="currentColor" stroke="none"/></svg></span><span class="ft" style="left:46.5px;letter-spacing:-0.333px">Alkalmazások</span></div><div class="fav" style="left:998.6px;top:6px;width:142.8px"><span class="ic" style="left:18.2px;top:13.4px"><svg width="24.2" height="18.6" viewBox="0 0 26 20" style="" fill="none" stroke="currentColor" stroke-linecap="round" stroke-linejoin="round"><path d="M1.5 12.5 L5 3.5 A3 3 0 0 1 7.8 1.5 H18.2 A3 3 0 0 1 21 3.5 L24.5 12.5" stroke-width="2"/><rect x="1.5" y="10.5" width="23" height="8" rx="3" stroke-width="2"/><circle cx="20" cy="14.5" r="1.3" fill="currentColor" stroke="none"/></svg></span><span class="ft" style="left:51.0px;letter-spacing:-0.432px">Gyökér</span></div><div class="plus" style="left:1874.8000000000002px;top:20.600000000000023px;width:16px;height:16px"></div><div class="tab" style="left:6.0px;top:64px;width:111.8px"><span class="ic" style="left:17px"><svg width="24" height="20" viewBox="0 0 24 20" style="" fill="none" stroke="currentColor" stroke-linecap="round" stroke-linejoin="round"><path d="M1.5 5 V16 a2.5 2.5 0 0 0 2.5 2.5 H20 a2.5 2.5 0 0 0 2.5 -2.5 V6.5 A2.5 2.5 0 0 0 20 4 H11.5 L9.5 2 A2 2 0 0 0 8.2 1.5 H4 A2.5 2.5 0 0 0 1.5 4 Z" stroke-width="2"/><path d="M1.5 8 H22.5" stroke-width="2"/></svg></span><span class="tt" style="left:52px">ariel</span></div><div class="plus" style="left:1876.6px;top:77px;width:18px;height:18px"></div><svg class="nav" style="left:5.6px;top:122px" width="96" height="32" viewBox="0 0 96 32" fill="none" stroke-linecap="round" stroke-linejoin="round"><path d="M17 4 L4 16 L17 28" stroke="#7ffcff" stroke-width="3.2"/><path d="M35 4 L48 16 L35 28" stroke="#1c2f86" stroke-width="3.2"/><path d="M61.5 23.5 L74 10.5 L86.5 23.5" stroke="#7ffcff" stroke-width="3.2"/></svg><div class="vsep" style="left:114.1px;top:124px"></div><span class="crumb y" style="left:138.5px;top:115.19999999999999px;letter-spacing:0px">/</span><svg class="nav" style="left:165.5px;top:127px" width="16" height="24" viewBox="0 0 16 24" fill="none" stroke="#bab833" stroke-width="2.4" stroke-linecap="round" stroke-linejoin="round"><path d="M2 2 L13.5 12 L2 22"/></svg><span class="crumb y" style="left:195.0px;top:115.19999999999999px;letter-spacing:-0.402px">Users</span><svg class="nav" style="left:301.0px;top:127px" width="16" height="24" viewBox="0 0 16 24" fill="none" stroke="#bab833" stroke-width="2.4" stroke-linecap="round" stroke-linejoin="round"><path d="M2 2 L13.5 12 L2 22"/></svg><span class="crumb cy" style="left:328.5px;top:115.19999999999999px;letter-spacing:-0.21px">ariel</span><svg class="nav" style="left:1828.9px;top:126px" width="32" height="25" viewBox="0 0 32 25" fill="none" stroke="#7ffcff" stroke-width="2.2" stroke-linecap="round"><path d="M9.5 3 H30.5 M9.5 12.5 H30.5 M9.5 22 H30.5"/><circle cx="2.3" cy="3" r="1.9" fill="#7ffcff" stroke="none"/><circle cx="2.3" cy="12.5" r="1.9" fill="#7ffcff" stroke="none"/><circle cx="2.3" cy="22" r="1.9" fill="#7ffcff" stroke="none"/></svg><svg class="nav" style="left:1873.3px;top:123.5px" width="29" height="29" viewBox="0 0 30 30" fill="none" stroke="#bab833" stroke-width="2.2"><rect x="1.2" y="1.2" width="11.3" height="11.3" rx="1.5"/><rect x="17.5" y="1.2" width="11.3" height="11.3" rx="1.5"/><rect x="1.2" y="17.5" width="11.3" height="11.3" rx="1.5"/><rect x="17.5" y="17.5" width="11.3" height="11.3" rx="1.5"/></svg><div class="listbg" style="top:162px;height:1738px"></div><div class="filter" style="left:14.0px;top:170px;width:1884.0px"><svg style="position:absolute;left:17px;top:12px" width="23" height="23" viewBox="0 0 23 23" fill="none" stroke="#bab833" stroke-width="2.4" stroke-linecap="round"><circle cx="9" cy="9" r="7.3"/><path d="M14.5 14.5 L21 21"/></svg><span class="ftx">Filter</span></div><div class="hdr" style="top:224px;width:1839.0px"></div><div class="hline" style="top:268px"></div><div class="hh" style="left:717.8px;top:232px"></div><div class="hh" style="left:917.8px;top:232px"></div><div class="hh" style="left:1158.0px;top:232px"></div><div class="hh" style="left:1576.7px;top:232px"></div><div class="hh" style="left:1810.8px;top:232px"></div><span class="ht" style="left:13.6px;top:224px;letter-spacing:-1.234px">Name</span><span class="ht" style="left:746.4px;top:224px;letter-spacing:-0.406px">Type</span><span class="ht" style="left:946.0px;top:224px;letter-spacing:-1.38px">Size</span><span class="ht" style="left:1186.3px;top:224px;letter-spacing:-0.282px">Date Modified</span><span class="ht" style="left:1605.2px;top:224px;letter-spacing:-0.504px">Permissi<u>…</u></span><svg class="nav" style="left:1405.5px;top:240px" width="22" height="13" viewBox="0 0 22 13" fill="none" stroke="#7ffcff" stroke-width="2.4" stroke-linecap="round" stroke-linejoin="round"><path d="M1.5 1.5 L11 11 L20.5 1.5"/></svg><div class="row" style="top:269px"><span class="ri" style="left:15.5px"><i class="fo"></i></span><span class="nm w" style="left:58.0px;letter-spacing:0.5px">..</span><span class="ty" style="left:746.0px;letter-spacing:-0.376px">katalógus</span><span class="sz" style="right:759.9px">&lt;DIR&gt;</span><span class="dt" style="left:1186.3px">2026. jan. 24. 16:44</span><span class="pm" style="left:1606.0px">rw-r--r--</span></div><div class="row" style="top:323px"><span class="ri" style="left:15.5px"><i class="fo"><b class="em"></b></i></span><span class="nm w" style="left:58.0px;letter-spacing:-0.38px">Desktop</span><span class="ty" style="left:746.0px;letter-spacing:-0.895px">mappa</span><span class="sz" style="right:759.9px">&lt;DIR&gt;</span><span class="dt" style="left:1186.3px">2026. jan. 24. 16:32</span><span class="pm" style="left:1606.0px">rwx------</span></div><div class="row" style="top:377px"><span class="ri" style="left:15.5px"><i class="fo"></i></span><span class="nm w" style="left:58.0px;letter-spacing:-0.532px">.claude</span><span class="ty" style="left:746.0px;letter-spacing:-0.895px">mappa</span><span class="sz" style="right:759.9px">&lt;DIR&gt;</span><span class="dt" style="left:1186.3px">2026. jan. 24. 16:29</span><span class="pm" style="left:1606.0px">rwxr-xr-x</span></div><div class="row" style="top:431px"><span class="ri" style="left:15.5px"><i class="pk"></i></span><span class="nm w" style="left:58.0px;letter-spacing:0.155px">.swiftpm</span><span class="ty" style="left:746.0px;letter-spacing:-0.895px">mappa</span><span class="sz" style="right:759.9px">&lt;DIR&gt;</span><span class="dt" style="left:1186.3px">2026. jan. 24. 16:31</span><span class="pm" style="left:1606.0px">rwxr-xr-x</span></div><div class="row" style="top:485px"><span class="ri" style="left:15.5px"><i class="fo"></i></span><span class="nm w" style="left:58.0px;letter-spacing:-0.676px">.zsh_sessions</span><span class="ty" style="left:746.0px;letter-spacing:-0.895px">mappa</span><span class="sz" style="right:759.9px">&lt;DIR&gt;</span><span class="dt" style="left:1186.3px">2026. jan. 24. 12:05</span><span class="pm" style="left:1606.0px">rwx------</span></div><div class="row hov" style="top:539px"><span class="ri" style="left:15.5px"><i class="fo"></i></span><span class="nm w" style="left:58.0px;letter-spacing:-0.944px">.ssh</span><span class="ty" style="left:746.0px;letter-spacing:-0.895px">mappa</span><span class="sz" style="right:759.9px">&lt;DIR&gt;</span><span class="dt" style="left:1186.3px">2026. jan. 24. 9:32</span><span class="pm" style="left:1606.0px">rwx------</span></div><div class="row" style="top:593px"><span class="ri" style="left:15.5px"><i class="fo"><b class="em"></b></i></span><span class="nm w" style="left:58.0px;letter-spacing:-0.664px">Downloads</span><span class="ty" style="left:746.0px;letter-spacing:-0.895px">mappa</span><span class="sz" style="right:759.9px">&lt;DIR&gt;</span><span class="dt" style="left:1186.3px">2026. jan. 23. 23:07</span><span class="pm" style="left:1606.0px">rwx------</span></div><div class="row" style="top:647px"><span class="ri" style="left:15.5px"><i class="fo"><b class="em"></b></i></span><span class="nm w" style="left:58.0px;letter-spacing:-0.385px">Documents</span><span class="ty" style="left:746.0px;letter-spacing:-0.895px">mappa</span><span class="sz" style="right:759.9px">&lt;DIR&gt;</span><span class="dt" style="left:1186.3px">2026. jan. 23. 15:20</span><span class="pm" style="left:1606.0px">rwx------</span></div><div class="row" style="top:701px"><span class="ri" style="left:15.5px"><i class="fo"><b class="bd"></b></i></span><span class="nm w" style="left:58.0px;letter-spacing:-1.518px">.Trash</span><span class="ty" style="left:746.0px;letter-spacing:-0.895px">mappa</span><span class="sz" style="right:759.9px">&lt;DIR&gt;</span><span class="dt" style="left:1186.3px">2026. jan. 23. 15:20</span><span class="pm" style="left:1606.0px">rwx------</span></div><div class="row" style="top:755px"><div class="cur"></div><span class="ri" style="left:15.5px"><i class="fo"></i></span><span class="nm w" style="left:58.0px;letter-spacing:-0.473px">.android</span><span class="ty" style="left:746.0px;letter-spacing:-0.895px">mappa</span><span class="sz" style="right:759.9px">&lt;DIR&gt;</span><span class="dt" style="left:1186.3px">2026. jan. 23. 7:04</span><span class="pm" style="left:1606.0px">rwxr-xr-x</span></div><div class="row" style="top:809px"><span class="ri" style="left:15.5px"><i class="fo"></i></span><span class="nm w" style="left:58.0px;letter-spacing:-0.174px">apk-server</span><span class="ty" style="left:746.0px;letter-spacing:-0.895px">mappa</span><span class="sz" style="right:759.9px">&lt;DIR&gt;</span><span class="dt" style="left:1186.3px">2026. jan. 21. 17:36</span><span class="pm" style="left:1606.0px">rwxr-xr-x</span></div><div class="row" style="top:863px"><span class="ri" style="left:15.5px"><i class="fo"></i></span><span class="nm w" style="left:58.0px;letter-spacing:-0.446px">.gradle</span><span class="ty" style="left:746.0px;letter-spacing:-0.895px">mappa</span><span class="sz" style="right:759.9px">&lt;DIR&gt;</span><span class="dt" style="left:1186.3px">2026. jan. 21. 13:39</span><span class="pm" style="left:1606.0px">rwxr-xr-x</span></div><div class="row" style="top:917px"><span class="ri" style="left:15.5px"><i class="fo"></i></span><span class="nm w" style="left:58.0px;letter-spacing:-0.533px">keystores</span><span class="ty" style="left:746.0px;letter-spacing:-0.895px">mappa</span><span class="sz" style="right:759.9px">&lt;DIR&gt;</span><span class="dt" style="left:1186.3px">2026. jan. 21. 13:37</span><span class="pm" style="left:1606.0px">rwxr-xr-x</span></div><div class="row" style="top:971px"><span class="ri" style="left:15.5px"><i class="fo"></i></span><span class="nm w" style="left:58.0px;letter-spacing:-0.38px">.hawtjni</span><span class="ty" style="left:746.0px;letter-spacing:-0.895px">mappa</span><span class="sz" style="right:759.9px">&lt;DIR&gt;</span><span class="dt" style="left:1186.3px">2026. jan. 21. 12:48</span><span class="pm" style="left:1606.0px">rwxr-xr-x</span></div><div class="row" style="top:1025px"><span class="ri" style="left:15.5px"><i class="fo"></i></span><span class="nm w" style="left:58.0px;letter-spacing:-0.845px">.expo</span><span class="ty" style="left:746.0px;letter-spacing:-0.895px">mappa</span><span class="sz" style="right:759.9px">&lt;DIR&gt;</span><span class="dt" style="left:1186.3px">2026. jan. 21. 9:29</span><span class="pm" style="left:1606.0px">rwxr-xr-x</span></div><div class="row" style="top:1079px"><span class="ri" style="left:15.5px"><i class="fo"></i></span><span class="nm w" style="left:58.0px;letter-spacing:0.267px">.app-store</span><span class="ty" style="left:746.0px;letter-spacing:-0.895px">mappa</span><span class="sz" style="right:759.9px">&lt;DIR&gt;</span><span class="dt" style="left:1186.3px">2026. jan. 21. 9:02</span><span class="pm" style="left:1606.0px">rwxr-xr-x</span></div><div class="row" style="top:1133px"><span class="ri" style="left:15.5px"><i class="fo"><b class="em"></b></i></span><span class="nm w" style="left:58.0px;letter-spacing:-0.041px">Library</span><span class="ty" style="left:746.0px;letter-spacing:-0.895px">mappa</span><span class="sz" style="right:759.9px">&lt;DIR&gt;</span><span class="dt" style="left:1186.3px">2026. jan. 20. 19:26</span><span class="pm" style="left:1606.0px">rwx------</span></div><div class="row" style="top:1187px"><span class="ri" style="left:15.5px"><i class="fo"></i></span><span class="nm w" style="left:58.0px;letter-spacing:-0.249px">.cocoapods</span><span class="ty" style="left:746.0px;letter-spacing:-0.895px">mappa</span><span class="sz" style="right:759.9px">&lt;DIR&gt;</span><span class="dt" style="left:1186.3px">2026. jan. 19. 18:16</span><span class="pm" style="left:1606.0px">rwxr-xr-x</span></div><div class="row" style="top:1241px"><span class="ri" style="left:15.5px"><i class="fo"></i></span><span class="nm w" style="left:58.0px;letter-spacing:-0.249px">.gem</span><span class="ty" style="left:746.0px;letter-spacing:-0.895px">mappa</span><span class="sz" style="right:759.9px">&lt;DIR&gt;</span><span class="dt" style="left:1186.3px">2026. jan. 18. 18:55</span><span class="pm" style="left:1606.0px">rwxr-xr-x</span></div><div class="row" style="top:1295px"><span class="ri" style="left:15.5px"><i class="fo"></i></span><span class="nm w" style="left:58.0px;letter-spacing:-0.381px">node_modules</span><span class="ty" style="left:746.0px;letter-spacing:-0.895px">mappa</span><span class="sz" style="right:759.9px">&lt;DIR&gt;</span><span class="dt" style="left:1186.3px">2026. jan. 18. 10:30</span><span class="pm" style="left:1606.0px">rwxr-xr-x</span></div><div class="row" style="top:1349px"><span class="ri" style="left:15.5px"><i class="fo"><b class="em"></b></i></span><span class="nm w" style="left:58.0px;letter-spacing:-0.424px">Developer</span><span class="ty" style="left:746.0px;letter-spacing:-0.895px">mappa</span><span class="sz" style="right:759.9px">&lt;DIR&gt;</span><span class="dt" style="left:1186.3px">2026. jan. 18. 9:57</span><span class="pm" style="left:1606.0px">rwxr-xr-x</span></div><div class="row" style="top:1403px"><span class="ri" style="left:15.5px"><i class="fo"></i></span><span class="nm w" style="left:58.0px;letter-spacing:-0.016px">.npm</span><span class="ty" style="left:746.0px;letter-spacing:-0.895px">mappa</span><span class="sz" style="right:759.9px">&lt;DIR&gt;</span><span class="dt" style="left:1186.3px">2026. jan. 18. 9:55</span><span class="pm" style="left:1606.0px">rwxr-xr-x</span></div><div class="row" style="top:1457px"><span class="ri" style="left:15.5px"><i class="fo"><b class="em"></b></i></span><span class="nm w" style="left:58.0px;letter-spacing:-0.321px">Pictures</span><span class="ty" style="left:746.0px;letter-spacing:-0.895px">mappa</span><span class="sz" style="right:759.9px">&lt;DIR&gt;</span><span class="dt" style="left:1186.3px">2026. jan. 17. 7:12</span><span class="pm" style="left:1606.0px">rwx------</span></div><div class="row" style="top:1511px"><span class="ri" style="left:15.5px"><i class="fo"></i></span><span class="nm w" style="left:58.0px;letter-spacing:-0.911px">SFTP test</span><span class="ty" style="left:746.0px;letter-spacing:-0.895px">mappa</span><span class="sz" style="right:759.9px">&lt;DIR&gt;</span><span class="dt" style="left:1186.3px">2026. jan. 16. 17:59</span><span class="pm" style="left:1606.0px">rwxr-xr-x</span></div><div class="row" style="top:1565px"><span class="ri" style="left:15.5px"><i class="fo"></i></span><span class="nm w" style="left:58.0px;letter-spacing:0.104px">.config</span><span class="ty" style="left:746.0px;letter-spacing:-0.895px">mappa</span><span class="sz" style="right:759.9px">&lt;DIR&gt;</span><span class="dt" style="left:1186.3px">2026. jan. 15. 7:25</span><span class="pm" style="left:1606.0px">rwxr-xr-x</span></div><div class="row" style="top:1619px"><span class="ri" style="left:15.5px"><i class="fo"></i></span><span class="nm w" style="left:58.0px;letter-spacing:0.216px">.chrome-debug-profile</span><span class="ty" style="left:746.0px;letter-spacing:-0.895px">mappa</span><span class="sz" style="right:759.9px">&lt;DIR&gt;</span><span class="dt" style="left:1186.3px">2026. jan. 15. 6:25</span><span class="pm" style="left:1606.0px">rwx------</span></div><div class="row" style="top:1673px"><span class="ri" style="left:15.5px"><i class="fo"></i></span><span class="nm w" style="left:58.0px;letter-spacing:-0.544px">.vnc</span><span class="ty" style="left:746.0px;letter-spacing:-0.895px">mappa</span><span class="sz" style="right:759.9px">&lt;DIR&gt;</span><span class="dt" style="left:1186.3px">2026. jan. 13. 11:47</span><span class="pm" style="left:1606.0px">rwx------</span></div><div class="row" style="top:1727px"><span class="ri" style="left:15.5px"><i class="fo"></i></span><span class="nm w" style="left:58.0px;letter-spacing:-0.172px">.cursor</span><span class="ty" style="left:746.0px;letter-spacing:-0.895px">mappa</span><span class="sz" style="right:759.9px">&lt;DIR&gt;</span><span class="dt" style="left:1186.3px">2026. jan. 8. 23:41</span><span class="pm" style="left:1606.0px">rwxr-xr-x</span></div><div class="row" style="top:1781px"><span class="ri" style="left:15.5px"><i class="fo"></i></span><span class="nm w" style="left:58.0px;letter-spacing:0.082px">woocommerce-mcp-server</span><span class="ty" style="left:746.0px;letter-spacing:-0.895px">mappa</span><span class="sz" style="right:759.9px">&lt;DIR&gt;</span><span class="dt" style="left:1186.3px">2026. jan. 7. 8:12</span><span class="pm" style="left:1606.0px">rwxr-xr-x</span></div><div class="row" style="top:1835px"><span class="ri" style="left:15.5px"><i class="fo"></i></span><span class="nm w" style="left:58.0px;letter-spacing:0.335px">mcp-google-ads</span><span class="ty" style="left:746.0px;letter-spacing:-0.895px">mappa</span><span class="sz" style="right:759.9px">&lt;DIR&gt;</span><span class="dt" style="left:1186.3px">2025. dec. 31. 18:46</span><span class="pm" style="left:1606.0px">rwxr-xr-x</span></div></div>
<div id="status">
<span class="ic" style="left:26.8px;top:12.5px;color:#bab833"><svg width="25" height="21" viewBox="0 0 24 20" style="" fill="none" stroke="currentColor" stroke-linecap="round" stroke-linejoin="round"><path d="M1.5 5 V16 a2.5 2.5 0 0 0 2.5 2.5 H20 a2.5 2.5 0 0 0 2.5 -2.5 V6.5 A2.5 2.5 0 0 0 20 4 H11.5 L9.5 2 A2 2 0 0 0 8.2 1.5 H4 A2.5 2.5 0 0 0 1.5 4 Z" stroke-width="2"/><path d="M1.5 8 H22.5" stroke-width="2"/></svg></span>
<span class="st" style="left:62px">/Users/ariel</span>
<span class="st" style="right:203px">46 items</span>
<i class="ssep"></i>
<span class="st" style="right:26px;letter-spacing:-.15px">36,41 GB free</span>
</div>
<div class="btn " style="left:16.0px;top:2144px;width:540.6px"><span class="b1">View</span><span class="b2">⌘Y</span></div><div class="btn dis" style="left:560.6px;top:2144px;width:540.6px"><span class="b1">Edit</span><span class="b2">⌘E</span></div><div class="btn " style="left:1105.1px;top:2144px;width:540.6px"><span class="b1">Copy</span><span class="b2">⌘C</span></div><div class="btn " style="left:1649.7px;top:2144px;width:540.6px"><span class="b1">Move</span><span class="b2">⌘X</span></div><div class="btn " style="left:2194.3px;top:2144px;width:540.6px"><span class="b1">Mkdir</span><span class="b2">⇧⌘N</span></div><div class="btn " style="left:2738.9px;top:2144px;width:540.6px"><span class="b1">New</span><span class="b2">⌘N</span></div><div class="btn del" style="left:3283.4px;top:2144px;width:540.6px"><span class="b1">Delete</span><span class="b2">⌘<em>⌫</em></span></div>
</div>
</body></html>
